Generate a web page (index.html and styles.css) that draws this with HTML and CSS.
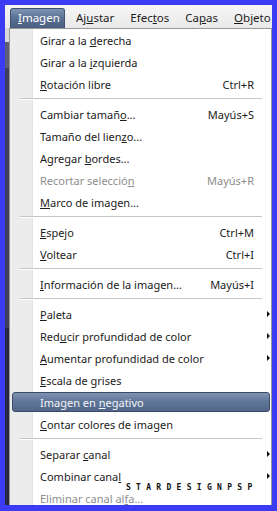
FILE: index.html
```html
<!DOCTYPE html>
<html>
<head>
    <title>Imagen</title>
    <link rel="stylesheet" href="styles.css">
</head>
<body>
<div class="screen">
    <div class="menubar">
        <span class="top active"><u>I</u>magen</span>
        <span class="top">Aj<u>u</u>star</span>
        <span class="top">Efec<u>t</u>os</span>
        <span class="top">Ca<u>p</u>as</span>
        <span class="top"><u>O</u>bjeto</span>
    </div>
    <div class="below">
        <div class="behind"></div>
        <div class="dropdown">
            <div class="item"><span class="label">Girar a la <u>d</u>erecha</span><span class="slot"></span></div>
            <div class="item"><span class="label">Girar a la <u>i</u>zquierda</span><span class="slot"></span></div>
            <div class="item"><span class="label"><u>R</u>otación libre</span><span class="key">Ctrl+R</span><span class="slot"></span></div>
            <div class="sep"></div>
            <div class="item"><span class="label">Cambiar tamañ<u>o</u>...</span><span class="key">Mayús+S</span><span class="slot"></span></div>
            <div class="item"><span class="label">Tamaño del lien<u>z</u>o...</span><span class="slot"></span></div>
            <div class="item"><span class="label">Agregar <u>b</u>ordes...</span><span class="slot"></span></div>
            <div class="item disabled"><span class="label">Recortar selecció<u>n</u></span><span class="key">Mayús+R</span><span class="slot"></span></div>
            <div class="item"><span class="label"><u>M</u>arco de imagen...</span><span class="slot"></span></div>
            <div class="sep"></div>
            <div class="item"><span class="label"><u>E</u>spejo</span><span class="key">Ctrl+M</span><span class="slot"></span></div>
            <div class="item"><span class="label"><u>V</u>oltear</span><span class="key">Ctrl+I</span><span class="slot"></span></div>
            <div class="sep"></div>
            <div class="item"><span class="label"><u>I</u>nformación de la imagen...</span><span class="key">Mayús+I</span><span class="slot"></span></div>
            <div class="sep"></div>
            <div class="item"><span class="label"><u>P</u>aleta</span><span class="slot arrow"></span></div>
            <div class="item"><span class="label">Red<u>u</u>cir profundidad de color</span><span class="slot arrow"></span></div>
            <div class="item"><span class="label"><u>A</u>umentar profundidad de color</span><span class="slot arrow"></span></div>
            <div class="item"><span class="label"><u>E</u>scala de grises</span><span class="slot"></span></div>
            <div class="item hover"><span class="label">Imagen en <u>n</u>egativo</span><span class="slot"></span></div>
            <div class="item"><span class="label"><u>C</u>ontar colores de imagen</span><span class="slot"></span></div>
            <div class="sep"></div>
            <div class="item"><span class="label">Separar <u>c</u>anal</span><span class="slot arrow"></span></div>
            <div class="item"><span class="label">Combinar cana<u>l</u></span><span class="slot arrow"></span></div>
            <div class="item disabled"><span class="label">Eliminar canal al<u>f</u>a...</span><span class="slot"></span></div>
            <div class="mark">STARDESIGNPSP</div>
        </div>
    </div>
</div>
</body>
</html>
```

FILE: styles.css
```css
body { margin: 0; background: #3b3bf4; font-family: "Noto Sans", "Open Sans", sans-serif; font-size: 11px; color: #1b1b1b; }
.screen { margin: 5px 5px 0 5px; height: 500px; overflow: hidden; display: flex; flex-direction: column; background: #f0f0f0; }
.menubar { height: 23px; display: flex; align-items: flex-end; padding-left: 5px; background: linear-gradient(#f6f6f6, #e9e9e9); flex: none; font-size: 11.5px; }
.top { height: 19px; line-height: 18px; padding: 0 8px; white-space: nowrap; }
.top.active { width: 40px; padding: 0 6px 0 7px; color: #fff; border: 1px solid #3e5170; border-bottom: 0; border-radius: 3px 3px 0 0; background: linear-gradient(#7e94b4, #5a7093 50%, #4a5f82); margin-right: 3px; }
.below { flex: 1; display: flex; min-height: 0; }
.behind { width: 4px; flex: none; background: linear-gradient(#d8d8d8 0 14px, #5b5f78 14px 40px, #3d3f5c 40px 300px, #262843 300px); }
.dropdown { position: relative; width: 261px; border: 1px solid #979797; border-bottom: 0; background: linear-gradient(to right, #ececec 0 22px, #e2e3e3 22px 23px, #fff 23px); }
.item { height: 22px; margin: 0 1px 0 2px; padding-left: 28px; display: flex; align-items: center; white-space: nowrap; }
.label { flex: 1; }
.key { margin-right: 8px; }
.slot { width: 8px; flex: none; }
.arrow::after { content: ""; display: block; margin-left: 5px; width: 0; height: 0; border-left: 3px solid #111; border-top: 3px solid transparent; border-bottom: 3px solid transparent; }
.disabled { color: #8d8d8d; }
.hover { height: 18px; margin: 1px 1px 1px 2px; border: 1px solid #3c4c66; border-radius: 3px; padding-left: 27px; color: #f2f5f9; background: linear-gradient(#7f93b2, #5f7596 50%, #51668a); }
.sep { height: 8px; margin: 0 9px 0 10px; background: linear-gradient(transparent 3px, #c5c5c5 3px 4px, #fff 4px 5px, transparent 5px); }
.mark { position: absolute; left: 116px; top: 454px; font-family: "DejaVu Sans Mono", monospace; font-size: 8px; font-weight: bold; letter-spacing: 5.3px; color: #111; }
```
